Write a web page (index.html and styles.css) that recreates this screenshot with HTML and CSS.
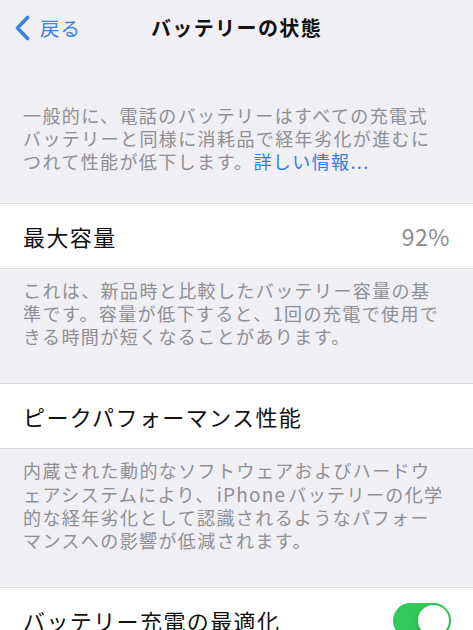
FILE: index.html
```html
<!DOCTYPE html>
<html lang="ja">
<head>
<meta charset="utf-8">
<title>バッテリーの状態</title>
<link rel="stylesheet" href="styles.css">
</head>
<body>
<div class="screen">
  <header class="nav">
    <div class="back">
      <svg class="chev" width="17" height="26" viewBox="0 0 17 26"><path d="M13.5 2.5 L3.5 13 L13.5 23.5" fill="none" stroke="#3a82e4" stroke-width="3.6" stroke-linecap="round" stroke-linejoin="round"/></svg>
      <span class="back-label">戻る</span>
    </div>
    <h1 class="title">バッテリーの状態</h1>
    <div class="spacer"></div>
  </header>

  <p class="note note-top">一般的に、電話のバッテリーはすべての充電式<br>バッテリーと同様に消耗品で経年劣化が進むに<br>つれて性能が低下します。<span class="link">詳しい情報...</span></p>

  <div class="cell">
    <span class="label">最大容量</span>
    <span class="value">92%</span>
  </div>
  <p class="note">これは、新品時と比較したバッテリー容量の基<br>準です。容量が低下すると、1回の充電で使用で<br>きる時間が短くなることがあります。</p>

  <div class="cell">
    <span class="label">ピークパフォーマンス性能</span>
  </div>
  <p class="note">内蔵された動的なソフトウェアおよびハードウ<br>ェアシステムにより、<span class="latin">iPhone</span>バッテリーの化学<br>的な経年劣化として認識されるようなパフォー<br>マンスへの影響が低減されます。</p>

  <div class="cell">
    <span class="label">バッテリー充電の最適化</span>
    <span class="toggle"><span class="knob"></span></span>
  </div>
</div>
</body>
</html>
```

FILE: styles.css
```css
html, body {
  margin: 0;
  padding: 0;
}
body {
  background: #f0eff4;
  font-family: "Noto Sans CJK JP", "Noto Sans", sans-serif;
  overflow: hidden;
  width: 473px;
  height: 630px;
}
.screen {
  display: flex;
  flex-direction: column;
}
.nav {
  height: 56px;
  display: grid;
  grid-template-columns: 1fr auto 1fr;
  align-items: center;
}
.back {
  display: flex;
  align-items: center;
  gap: 9px;
  padding-left: 14px;
  color: #3a82e4;
}
.chev {
  display: block;
}
.back-label {
  font-size: 19.5px;
  letter-spacing: 1px;
  line-height: 26px;
}
.title {
  margin: 0;
  font-size: 20px;
  font-weight: 700;
  letter-spacing: 1.4px;
  color: #111;
  line-height: 26px;
}
.note {
  margin: 0;
  padding: 10px 24px 35px 23px;
  font-size: 18px;
  line-height: 23px;
  letter-spacing: 1.4px;
  color: #8e8e93;
  white-space: nowrap;
}
.note-top {
  padding-top: 48px;
  padding-bottom: 30px;
}
.link {
  color: #2f7fdb;
}
.latin {
  letter-spacing: 1.2px;
  margin: 0 2px;
  font-size: 19px;
}
.cell {
  height: 64px;
  background: #fff;
  border-top: 1px solid #dcdce0;
  border-bottom: 1px solid #dcdce0;
  display: flex;
  align-items: center;
  justify-content: space-between;
  padding: 0 23px 0 23px;
  flex-shrink: 0;
}
.label {
  font-size: 22px;
  letter-spacing: 1.4px;
  color: #111;
}
.value {
  font-size: 23px;
  color: #8b8b90;
  letter-spacing: 0.5px;
}
.toggle {
  width: 58px;
  height: 35px;
  border-radius: 18px;
  background: #34c759;
  display: flex;
  align-items: center;
  justify-content: flex-end;
  padding: 0 2px;
  box-sizing: border-box;
  margin-right: -1px;
}
.knob {
  width: 31px;
  height: 31px;
  border-radius: 50%;
  background: #fff;
  box-shadow: 0 2px 4px rgba(0, 0, 0, 0.18);
}
```
